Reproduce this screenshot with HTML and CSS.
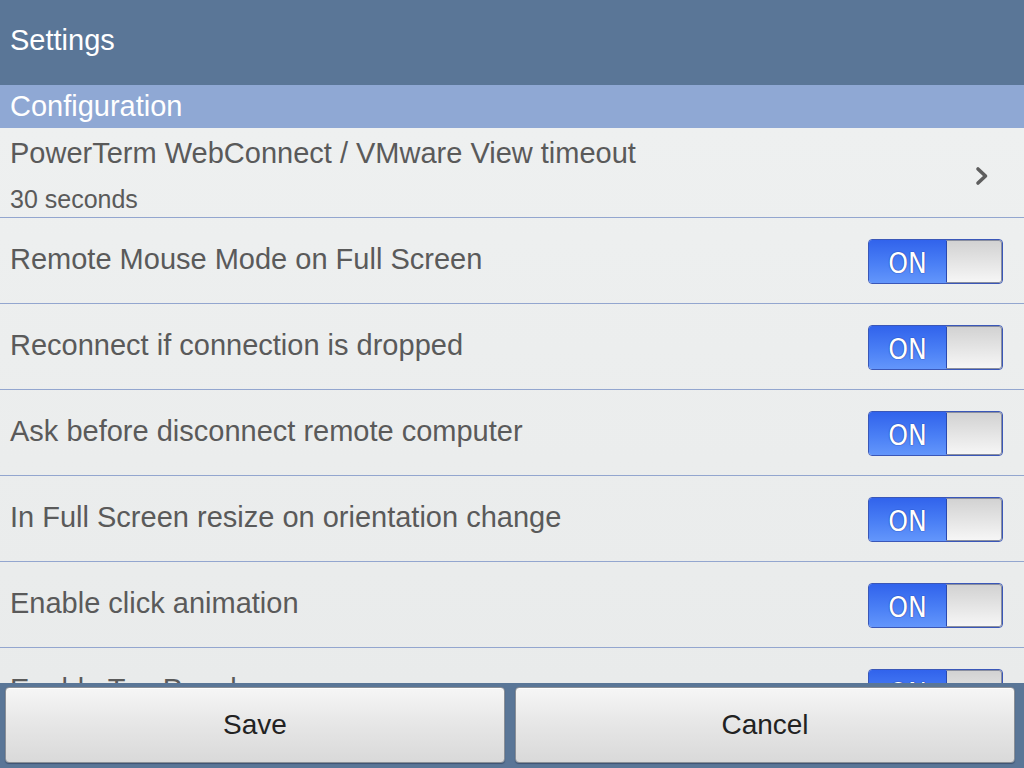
FILE: index.html
```html
<!DOCTYPE html>
<html lang="en">
<head>
  <meta charset="UTF-8">
  <title>Settings</title>
  <link rel="stylesheet" href="styles.css">
</head>
<body>
  <div class="screen">
    <div class="titlebar">Settings</div>
    <div class="section">Configuration</div>

    <div class="list">
      <div class="row row-link">
        <div class="row-text">
          <div class="row-title">PowerTerm WebConnect / VMware View timeout</div>
          <div class="row-sub">30 seconds</div>
        </div>
        <svg class="chevron" width="16" height="22" viewBox="0 0 16 22">
          <path d="M4 4 L11.5 11 L4 18" fill="none" stroke="#5e5e5e" stroke-width="3.6" stroke-linecap="round" stroke-linejoin="round"/>
        </svg>
      </div>

      <div class="row">
        <div class="row-title">Remote Mouse Mode on Full Screen</div>
        <div class="toggle"><span class="toggle-on">ON</span><span class="toggle-knob"></span></div>
      </div>
      <div class="row">
        <div class="row-title">Reconnect if connection is dropped</div>
        <div class="toggle"><span class="toggle-on">ON</span><span class="toggle-knob"></span></div>
      </div>
      <div class="row">
        <div class="row-title">Ask before disconnect remote computer</div>
        <div class="toggle"><span class="toggle-on">ON</span><span class="toggle-knob"></span></div>
      </div>
      <div class="row">
        <div class="row-title">In Full Screen resize on orientation change</div>
        <div class="toggle"><span class="toggle-on">ON</span><span class="toggle-knob"></span></div>
      </div>
      <div class="row">
        <div class="row-title">Enable click animation</div>
        <div class="toggle"><span class="toggle-on">ON</span><span class="toggle-knob"></span></div>
      </div>
      <div class="row">
        <div class="row-title">Enable Top Panel</div>
        <div class="toggle"><span class="toggle-on">ON</span><span class="toggle-knob"></span></div>
      </div>
    </div>

    <div class="footer">
      <button class="btn">Save</button>
      <button class="btn">Cancel</button>
    </div>
  </div>
</body>
</html>
```

FILE: styles.css
```css
body {
  margin: 0;
  font-family: 'Liberation Sans', Arial, sans-serif;
  background: #eceeee;
}
.screen {
  display: flex;
  flex-direction: column;
  width: 1024px;
  height: 768px;
  overflow: hidden;
}
.titlebar {
  flex: 0 0 85px;
  display: flex;
  align-items: center;
  padding: 0 10px 4px;
  box-sizing: border-box;
  background: #5a7697;
  color: #ffffff;
  font-size: 29px;
}
.section {
  flex: 0 0 43px;
  display: flex;
  align-items: center;
  padding: 0 10px 1px;
  box-sizing: border-box;
  background: #8fa8d4;
  color: #ffffff;
  font-size: 29px;
}
.list {
  flex: 1;
  overflow: hidden;
  background: linear-gradient(to bottom, #eef0f0, #e9ebeb);
}
.row {
  display: flex;
  align-items: center;
  justify-content: space-between;
  height: 86px;
  padding: 0 21px 2px 10px;
  box-sizing: border-box;
  border-bottom: 1px solid #93a6cf;
}
.row-link {
  height: 90px;
  padding: 0 34px 0 10px;
}
.row-text {
  display: flex;
  flex-direction: column;
  gap: 15px;
  padding-top: 6px;
}
.row-title {
  color: #5a5a5a;
  font-size: 29px;
}
.row-sub {
  color: #5a5a5a;
  font-size: 25px;
}
.chevron {
  margin-top: 6px;
}
.toggle {
  display: flex;
  width: 135px;
  height: 45px;
  margin-top: 4px;
  border: 1px solid #3a57b8;
  border-radius: 4px;
  box-sizing: border-box;
  overflow: hidden;
}
.toggle-on {
  width: 77px;
  display: flex;
  align-items: center;
  justify-content: center;
  padding-top: 3px;
  box-sizing: border-box;
  background: linear-gradient(to bottom, #3163ec, #4a7ff5 55%, #6396fb);
  color: #ffffff;
  font-family: 'DejaVu Sans Condensed', 'DejaVu Sans', sans-serif;
  font-stretch: condensed;
  font-size: 28px;
  text-shadow: 0 0 1px #1a3aa0, 0 0 1px #1a3aa0;
}
.toggle-knob {
  flex: 1;
  border: 1px solid #8a8fa0;
  border-left: 1px solid #2848b0;
  border-radius: 0 3px 3px 0;
  background: linear-gradient(to bottom, #d2d2d2, #f6f6f6);
}
.footer {
  flex: 0 0 85px;
  display: flex;
  gap: 10px;
  padding: 4px 9px 5px 5px;
  box-sizing: border-box;
  background: #5a7697;
}
.btn {
  flex: 1;
  border: 1px solid #8a8f96;
  border-radius: 4px;
  background: linear-gradient(to bottom, #f6f6f6, #e6e6e6 50%, #d9d9d9);
  box-shadow: inset 0 1px 0 #ffffff, 0 1px 1px #3d5370;
  color: #222222;
  font-family: 'Liberation Sans', Arial, sans-serif;
  font-size: 28px;
  cursor: pointer;
}
```
